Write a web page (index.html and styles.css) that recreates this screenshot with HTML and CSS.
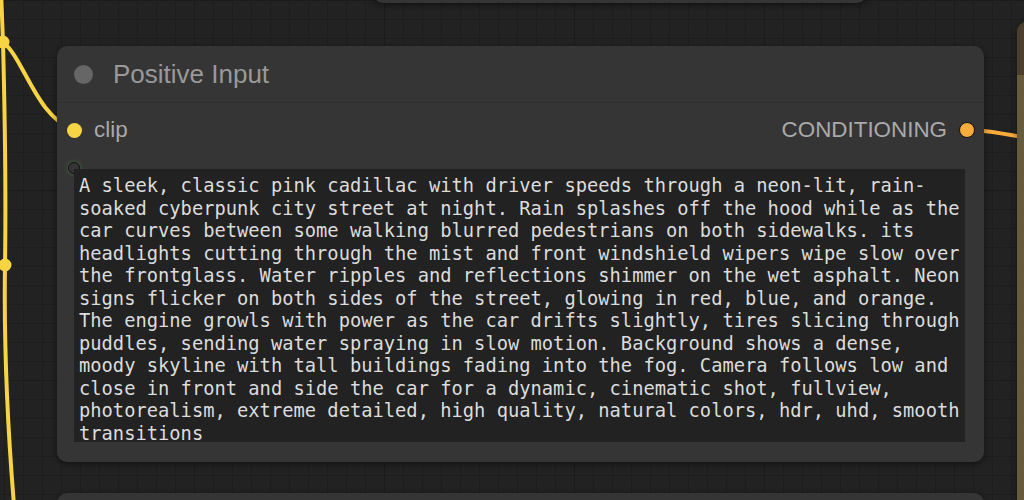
FILE: index.html
```html
<!DOCTYPE html>
<html lang="en">

<head>
    <meta charset="UTF-8" />
    <meta name="viewport" content="width=device-width, initial-scale=1.0" />
    <title>Positive Input</title>
    <link rel="stylesheet" href="styles.css">
</head>

<body>
    <div id="canvas">
        <!-- wires sit under the nodes -->
        <svg class="wires" width="1024" height="500" viewBox="0 0 1024 500">
            <path class="wire clip-wire" d="M 1 -10 L 3 42 C 5 120, 6 200, 5 265 C 4 330, 7 420, 14 505" />
            <path class="wire clip-wire" d="M 3 42 C 25 60, 35 115, 74 130" />
            <path class="wire cond-wire" d="M 967 130 C 990 130, 1000 134, 1024 137" />
            <circle class="reroute" cx="3" cy="42" r="6.5" />
            <circle class="reroute" cx="5" cy="265" r="6.5" />
        </svg>

        <div class="node node-top"></div>
        <div class="node node-bottom"></div>
        <div class="node node-side">
            <div class="side-header"></div>
        </div>

        <div class="node node-main">
            <div class="node-header">
                <span class="title-dot"></span>
                <span class="node-title">Positive Input</span>
            </div>
            <div class="node-body">
                <div class="slot-row">
                    <div class="slot slot-in">
                        <span class="slot-dot clip"></span>
                        <span class="slot-label">clip</span>
                    </div>
                    <div class="slot slot-out">
                        <span class="slot-label">CONDITIONING</span>
                        <span class="slot-dot conditioning"></span>
                    </div>
                </div>
                <span class="widget-slot"></span>
                <div class="prompt">A sleek, classic pink cadillac with driver speeds through a neon-lit, rain-
soaked cyberpunk city street at night. Rain splashes off the hood while as the
car curves between some walking blurred pedestrians on both sidewalks. its
headlights cutting through the mist and front windshield wipers wipe slow over
the frontglass. Water ripples and reflections shimmer on the wet asphalt. Neon
signs flicker on both sides of the street, glowing in red, blue, and orange.
The engine growls with power as the car drifts slightly, tires slicing through
puddles, sending water spraying in slow motion. Background shows a dense,
moody skyline with tall buildings fading into the fog. Camera follows low and
close in front and side the car for a dynamic, cinematic shot, fullview,
photorealism, extreme detailed, high quality, natural colors, hdr, uhd, smooth
transitions</div>
            </div>
        </div>
    </div>
</body>

</html>
```

FILE: styles.css
```css
body {
    margin: 0;
    padding: 0;
    background-color: #222;
    font-family: "Liberation Sans", Arial, sans-serif;
}

#canvas {
    position: relative;
    width: 1024px;
    height: 500px;
    overflow: hidden;
    background-color: #222;
    background-image:
        linear-gradient(to right, #1b1b1b 1px, transparent 1px),
        linear-gradient(to bottom, #1b1b1b 1px, transparent 1px),
        linear-gradient(to right, #1d1d1d 1px, transparent 1px),
        linear-gradient(to bottom, #1d1d1d 1px, transparent 1px);
    background-size: 190px 190px, 190px 190px, 19px 19px, 19px 19px;
    background-position: 4px 0, 0 0, 4px 0, 0 0;
}

/* wires */

.wires {
    position: absolute;
    top: 0;
    left: 0;
}

.wire {
    fill: none;
    stroke-width: 4;
    stroke-linecap: round;
}

.clip-wire {
    stroke: #f7d444;
}

.cond-wire {
    stroke: #f9ab3c;
}

.reroute {
    fill: #f7d444;
}

/* nodes */

.node {
    position: absolute;
    background: #353535;
    border-radius: 10px;
    box-shadow: 0 2px 6px rgba(0, 0, 0, 0.45);
}

.node-top {
    left: 373px;
    top: -50px;
    width: 494px;
    height: 53px;
}

.node-bottom {
    left: 57px;
    top: 493px;
    width: 927px;
    height: 60px;
}

.node-side {
    left: 1017px;
    top: 22px;
    width: 120px;
    height: 520px;
    background: #675b3e;
    overflow: hidden;
}

.side-header {
    height: 53px;
    background: #4a3e2c;
}

.node-main {
    left: 57px;
    top: 46px;
    width: 927px;
    height: 416px;
    display: flex;
    flex-direction: column;
}

.node-header {
    height: 57px;
    display: flex;
    align-items: center;
    border-bottom: 1px solid #2f2f2f;
    box-sizing: border-box;
}

.title-dot {
    width: 19px;
    height: 19px;
    margin-left: 17px;
    border-radius: 50%;
    background: #666;
}

.node-title {
    margin-left: 20px;
    font-size: 26px;
    color: #999;
}

.node-body {
    position: relative;
    flex: 1;
    display: flex;
    flex-direction: column;
    padding: 12px 10px 19px 10px;
}

.slot-row {
    height: 30px;
    display: flex;
    justify-content: space-between;
    align-items: center;
}

.slot {
    display: flex;
    align-items: center;
}

.slot-label {
    font-size: 22.4px;
    color: #a9a9a9;
}

.slot-in .slot-label {
    margin-left: 12px;
}

.slot-out .slot-label {
    margin-right: 12px;
}

.slot-dot {
    width: 15px;
    height: 15px;
    border-radius: 50%;
    box-sizing: border-box;
}

.slot-dot.clip {
    background: #f7d444;
}

.slot-dot.conditioning {
    width: 16px;
    height: 16px;
    margin-right: -1px;
    background: #f9ab3c;
    border: 1.5px solid #111;
}

.widget-slot {
    position: absolute;
    left: 11px;
    top: 59px;
    width: 10px;
    height: 10px;
    border-radius: 50%;
    border: 1.5px solid #111;
    box-shadow: 0 0 4px rgba(80, 160, 80, 0.6);
}

.prompt {
    position: relative;
    margin: 24px 9px 0 7px;
    height: 273px;
    padding: 6px 5px 0 5px;
    box-sizing: border-box;
    overflow: hidden;
    background: #222;
    color: #dcdcdc;
    font-family: "DejaVu Sans Mono", "Liberation Mono", monospace;
    font-size: 18.75px;
    line-height: 22.5px;
    white-space: pre;
}
```
